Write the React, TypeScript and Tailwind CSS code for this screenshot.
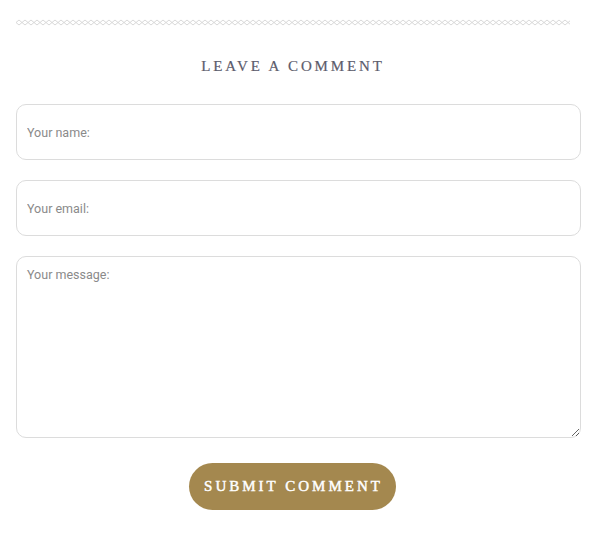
export default function App() {
  return (
    <div className="w-[603px] h-[540px] bg-white pt-[19px] pl-4">
      <div className="w-[554px]">
        <svg width="554" height="7" className="block">
          <defs>
            <pattern id="dia" width="6" height="7" patternUnits="userSpaceOnUse">
              <path d="M0 3.5 L3 1 L6 3.5 L3 6 Z" fill="none" stroke="#d4d4d4" strokeWidth="0.9" />
            </pattern>
          </defs>
          <rect width="554" height="7" fill="url(#dia)" />
        </svg>
        <h3
          className="mt-[31px] text-center text-[15px] leading-[18px] tracking-[0.19em] text-[#5c5c6c] [-webkit-text-stroke:0.2px_#5c5c6c]"
          style={{ fontFamily: '"Liberation Serif", "DejaVu Serif", serif' }}
        >
          LEAVE A COMMENT
        </h3>
      </div>
      <form className="mt-[29px] flex flex-col" style={{ fontFamily: 'Roboto, "Liberation Sans", sans-serif' }}>
        <input
          placeholder="Your name:"
          className="w-[565px] h-[56px] rounded-[10px] border border-[#dcdcdc] px-[10px] text-[12.5px] text-[#555] placeholder:text-[#8a8a8a] outline-none"
        />
        <input
          placeholder="Your email:"
          className="mt-[20px] w-[565px] h-[56px] rounded-[10px] border border-[#dcdcdc] px-[10px] text-[12.5px] text-[#555] placeholder:text-[#8a8a8a] outline-none"
        />
        <textarea
          placeholder="Your message:"
          className="mt-[20px] w-[565px] h-[182px] rounded-[10px] border border-[#dcdcdc] px-[10px] pt-[9px] text-[12.5px] text-[#555] placeholder:text-[#8a8a8a] outline-none"
        />
        <div className="w-[552px] flex justify-center mt-[25px]">
          <button
            type="button"
            className="h-[47px] w-[207px] rounded-full bg-[#a4884f] text-white text-[15px] tracking-[0.2em] pl-[3px] [-webkit-text-stroke:0.45px_#ffffff]"
            style={{ fontFamily: '"Liberation Serif", "DejaVu Serif", serif' }}
          >
            SUBMIT COMMENT
          </button>
        </div>
      </form>
    </div>
  );
}
